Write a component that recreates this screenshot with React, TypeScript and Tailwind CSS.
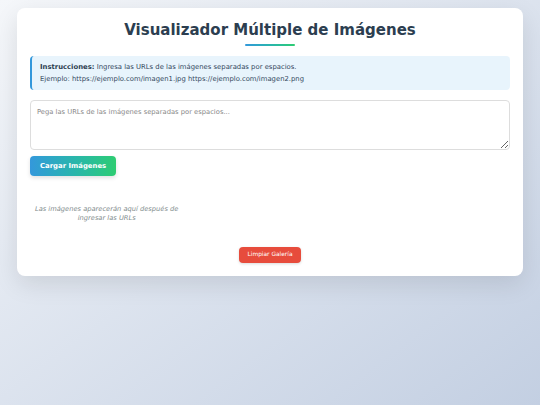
import React from "react";

const FONT = '"DejaVu Sans", Verdana, sans-serif';

export default function App() {
  return (
    <div
      className="min-h-[405px] bg-gradient-to-br from-[#f5f7fa] to-[#c3cfe2] px-[17px] pt-[8px] pb-4"
      style={{ fontFamily: FONT }}
    >
      <div className="rounded-[8px] bg-white px-[13px] pt-[13px] pb-[13px] shadow-[0_8px_24px_rgba(0,0,0,0.1)]">
        {/* Title */}
        <div className="flex flex-col items-center">
          <h1 className="text-[15px] font-bold leading-[18px] text-[#2c3e50]">
            Visualizador Múltiple de Imágenes
          </h1>
          <div className="mt-[5px] h-[2px] w-[50px] rounded bg-gradient-to-r from-[#3498db] to-[#2ecc71]" />
        </div>

        {/* Instructions */}
        <div className="mt-[10px] rounded-[4px] border-l-[2px] border-[#3498db] bg-[#e8f4fc] px-[8px] py-[5px] text-[6.85px] leading-[12px] text-[#34495e]">
          <p>
            <strong className="text-[#2c3e50]">Instrucciones:</strong> Ingresa las URLs de las imágenes separadas por espacios.
          </p>
          <p>Ejemplo: https://ejemplo.com/imagen1.jpg https://ejemplo.com/imagen2.png</p>
        </div>

        {/* Input */}
        <textarea
          className="mt-[9.5px] block h-[50.5px] w-full resize-y rounded-[4px] border border-[#dddddd] px-[6px] py-[6px] text-[6.75px] leading-[10px] text-[#2c3e50] placeholder:text-[#888]"
          style={{ fontFamily: FONT }}
          placeholder="Pega las URLs de las imágenes separadas por espacios..."
        />

        <button className="mt-[6px] h-[20px] rounded-[4px] bg-gradient-to-r from-[#3498db] to-[#2ecc71] px-[10px] text-[6.9px] font-bold text-white shadow-[0_2px_4px_rgba(0,0,0,0.12)]">
          Cargar Imágenes
        </button>

        {/* Gallery */}
        <div className="mt-[29px] grid grid-cols-[repeat(auto-fill,minmax(150px,1fr))] gap-[10px]">
          <p className="text-center text-[6.7px] italic leading-[9px] text-[#7f8c8d]">
            Las imágenes aparecerán aquí después de ingresar las URLs
          </p>
        </div>

        <div className="mt-[23.5px] flex justify-center">
          <button className="h-[16px] rounded-[4px] bg-[#e74c3c] px-[8px] text-[5.9px] text-white shadow-[0_1px_3px_rgba(0,0,0,0.15)]">
            Limpiar Galería
          </button>
        </div>
      </div>
    </div>
  );
}
